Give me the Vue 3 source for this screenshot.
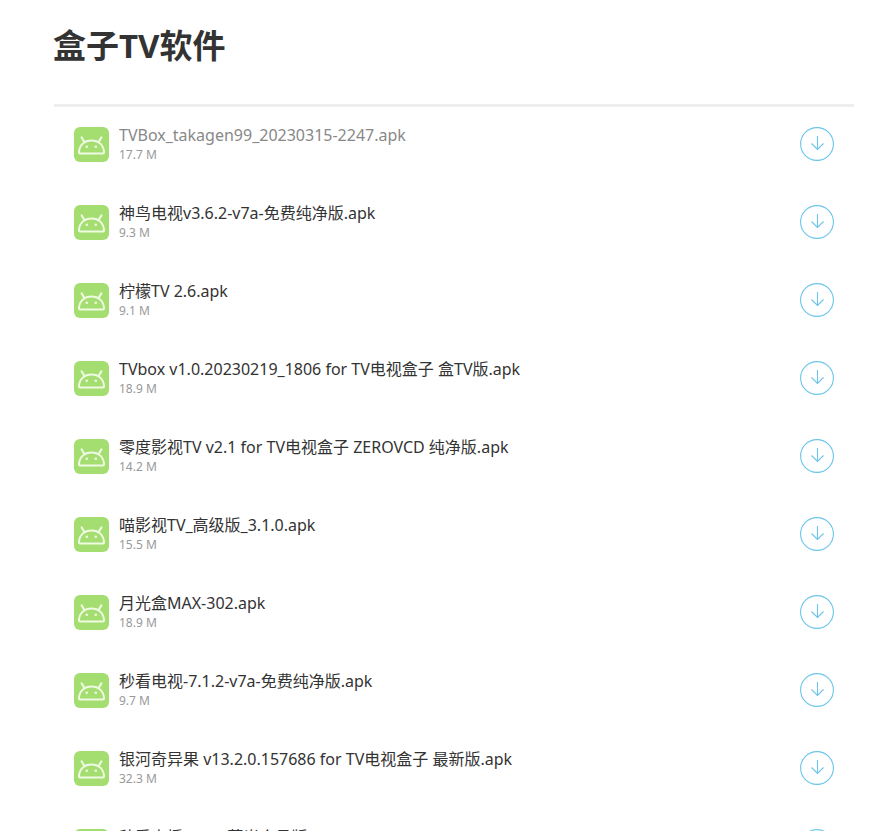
<template>
  <main class="page">
    <h1 class="title">盒子TV软件</h1>
    <ul class="file-list">
      <li v-for="file in files" :key="file.name" class="file">
        <svg class="file-icon" viewBox="0 0 35 35" aria-hidden="true">
          <rect width="35" height="35" rx="6" fill="#a4dd70" />
          <g fill="none" stroke="#effae3" stroke-width="2" stroke-linecap="round" stroke-linejoin="round">
            <path d="M5 25.4C5.2 18 10.5 13.4 17.5 13.4S29.8 18 30 25.4Q30 26.4 29 26.4H6Q5 26.4 5 25.4Z" />
            <path d="M10.2 14.6L7.6 10.4M24.8 14.6L27.4 10.4" />
          </g>
          <circle cx="12.8" cy="19.8" r="1.3" fill="#effae3" />
          <circle cx="21.8" cy="19.8" r="1.3" fill="#effae3" />
        </svg>
        <div class="file-info">
          <a href="#" class="file-name" :class="{ active: file.active }">{{ file.name }}</a>
          <span class="file-size">{{ file.size }}</span>
        </div>
        <button type="button" class="download" :aria-label="'下载 ' + file.name">
          <svg viewBox="0 0 34 34" fill="none" stroke="#6cc5ea" stroke-width="1.1">
            <circle cx="17" cy="17" r="16.4" />
            <path d="M17.5 9V22.5M11.5 16.5L17.5 22.5L23.5 16.5" />
          </svg>
        </button>
      </li>
    </ul>
  </main>
</template>

<script setup>
import { ref } from 'vue'

const files = ref([
  { name: 'TVBox_takagen99_20230315-2247.apk', size: '17.7 M', active: true },
  { name: '神鸟电视v3.6.2-v7a-免费纯净版.apk', size: '9.3 M' },
  { name: '柠檬TV 2.6.apk', size: '9.1 M' },
  { name: 'TVbox v1.0.20230219_1806 for TV电视盒子 盒TV版.apk', size: '18.9 M' },
  { name: '零度影视TV v2.1 for TV电视盒子 ZEROVCD 纯净版.apk', size: '14.2 M' },
  { name: '喵影视TV_高级版_3.1.0.apk', size: '15.5 M' },
  { name: '月光盒MAX-302.apk', size: '18.9 M' },
  { name: '秒看电视-7.1.2-v7a-免费纯净版.apk', size: '9.7 M' },
  { name: '银河奇异果 v13.2.0.157686 for TV电视盒子 最新版.apk', size: '32.3 M' },
  { name: '秒看直播v2.1.8蓝光会员版.apk', size: '9.8 M' }
])
</script>

<style>
body {
  background: #fff;
}
</style>

<style scoped>
.page {
  height: 100vh;
  box-sizing: border-box;
  overflow: hidden;
  padding: 22px 36px 0 53px;
  font-family: Tahoma, "Noto Sans", "Noto Sans CJK SC", sans-serif;
  color: #333;
}

.title {
  margin: 0 0 34px;
  font-size: 33px;
  line-height: 48px;
  font-weight: 700;
}

.file-list {
  margin: 0 0 0 1px;
  padding: 0;
  list-style: none;
  border-top: 3px solid #eee;
}

.file {
  display: flex;
  align-items: flex-start;
  height: 78px;
  padding: 18px 20px 0;
  box-sizing: border-box;
}

.file-icon {
  flex: none;
  width: 35px;
  height: 35px;
  margin: 2px 10px 0 0;
}

.file-info {
  flex: 1;
  min-width: 0;
}

.file-name {
  display: block;
  overflow: hidden;
  font-size: 16px;
  line-height: 20px;
  color: #333;
  text-decoration: none;
  text-overflow: ellipsis;
  white-space: nowrap;
}

.file-name.active {
  color: #888;
}

.file-size {
  display: block;
  font-size: 12px;
  line-height: 20px;
  color: #999;
}

.download {
  flex: none;
  width: 34px;
  height: 34px;
  margin-top: 2px;
  padding: 0;
  border: 0;
  background: none;
  cursor: pointer;
}

.download svg {
  display: block;
}
</style>
